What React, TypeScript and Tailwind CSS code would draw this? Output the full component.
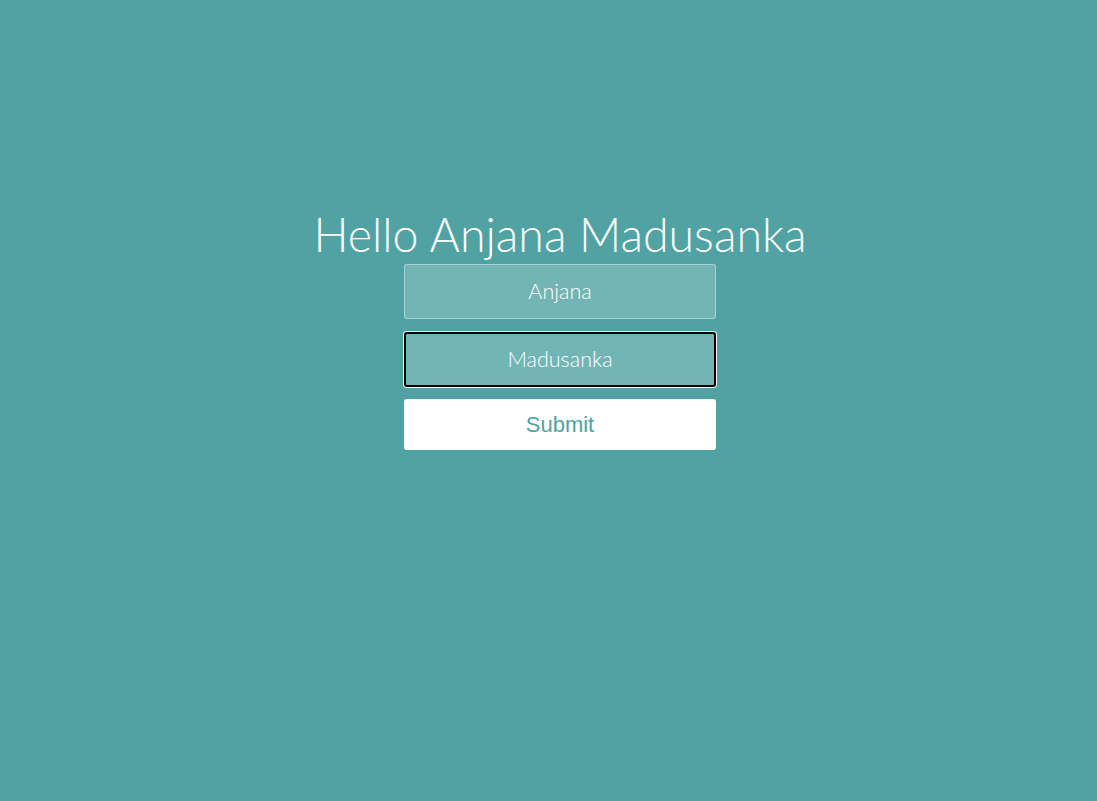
export default function App() {
  return (
    <div className="min-h-screen w-full bg-[#50a3a2] font-['Lato','Open_Sans',sans-serif]">
      <div className="flex flex-col items-center pl-[23px] pt-[205px]">
        <h1 className="text-[46.5px] font-light leading-[58px] text-white">Hello Anjana Madusanka</h1>
        <form className="mt-[1px] flex w-[312px] flex-col">
          <input
            readOnly
            value="Anjana"
            className="h-[55px] w-full rounded-[3px] border border-white/40 bg-white/20 pb-[2px] text-center text-[21.5px] font-light text-white outline-none"
          />
          <input
            readOnly
            value="Madusanka"
            className="mt-[13px] h-[55px] w-full rounded-[3px] border-2 border-black bg-white/20 pb-[2px] text-center text-[21.5px] font-light text-white shadow-[0_0_0_1px_#ffffff] outline-none"
          />
          <button
            type="button"
            className="mt-[12px] h-[51px] w-full rounded-[3px] bg-white font-['Liberation_Sans',Arial,sans-serif] text-[22px] text-[#50a3a2]"
          >
            Submit
          </button>
        </form>
      </div>
    </div>
  );
}
